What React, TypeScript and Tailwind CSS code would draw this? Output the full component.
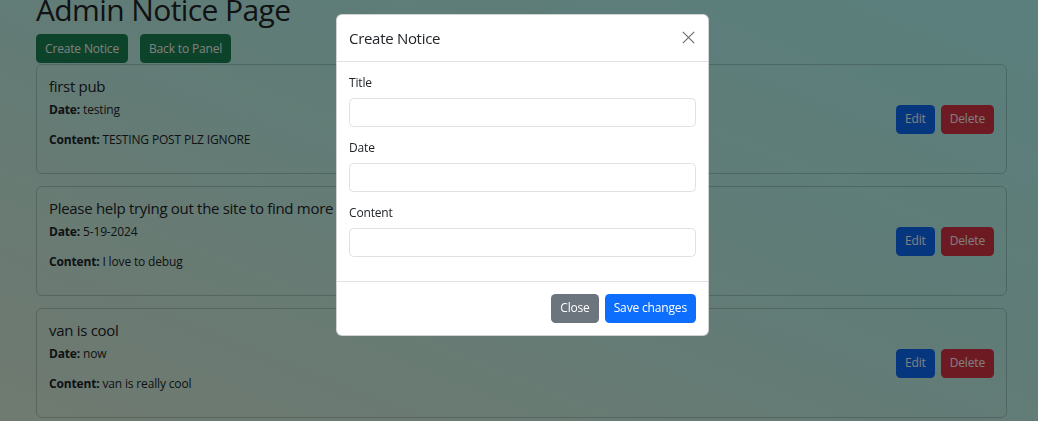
import React from "react";

interface Notice {
  title: string;
  date: string;
  content: string;
}

const NOTICES: Notice[] = [
  { title: "first pub", date: "testing", content: "TESTING POST PLZ IGNORE" },
  {
    title: "Please help trying out the site to find more",
    date: "5-19-2024",
    content: "I love to debug",
  },
  { title: "van is cool", date: "now", content: "van is really cool" },
];

// Segoe UI isn't around, Open Sans pulled in a little to match its widths
const FONT = "font-['Open_Sans','Noto_Sans',sans-serif] tracking-[-0.01em]";

function NoticeCard({ notice }: { notice: Notice }) {
  return (
    <div className="mb-[12px] flex items-center justify-between rounded-[6px] border border-black/[0.175] p-[12px]">
      <div>
        <h5 className="mb-[6px] text-[15px] leading-[1.2] font-normal tracking-[-0.02em]">{notice.title}</h5>
        <p className="mb-[12px] text-[12px] leading-[1.5]">
          <strong className="font-bold">Date:</strong> {notice.date}
        </p>
        <p className="mb-[12px] text-[12px] leading-[1.5]">
          <strong className="font-bold">Content:</strong> {notice.content}
        </p>
      </div>
      <div className="flex gap-[6px]">
        <button className="h-[29px] rounded-[4.5px] bg-[#0d6efd] px-[9px] text-[12px] text-white">Edit</button>
        <button className="h-[29px] rounded-[4.5px] bg-[#dc3545] px-[9px] text-[12px] text-white">Delete</button>
      </div>
    </div>
  );
}

function Field({ label }: { label: string }) {
  return (
    <div className="mb-[12px]">
      <label className="mb-[6px] block text-[12px] leading-[1.5] text-[#212529]">{label}</label>
      <input
        type="text"
        className="block h-[29px] w-full rounded-[4.5px] border border-[#dee2e6] bg-white px-[9px] text-[12px] outline-none"
      />
    </div>
  );
}

function CreateNoticeModal() {
  return (
    <div className="fixed left-[336px] top-[14px] w-[373px] rounded-[6px] border border-black/[0.175] bg-white text-[#212529]">
      {/* Header */}
      <div className="flex h-[46.5px] items-center justify-between border-b border-[#dee2e6] px-[12px]">
        <h5 className="text-[15px] leading-[1.5] font-normal tracking-[-0.02em]">Create Notice</h5>
        <button className="mr-[-1px] flex h-[18px] w-[18px] items-center justify-center text-[#707070]">
          <svg width="13" height="13" viewBox="0 0 16 16" fill="none" stroke="currentColor" strokeWidth="1.5">
            <path d="M1 1L15 15M15 1L1 15" />
          </svg>
        </button>
      </div>

      {/* Body */}
      <div className="p-[12px] pb-0">
        <Field label="Title" />
        <Field label="Date" />
        <Field label="Content" />
        <div className="h-[12px]" />
      </div>

      {/* Footer */}
      <div className="flex justify-end gap-[6px] border-t border-[#dee2e6] p-[12px]">
        <button className="h-[29px] rounded-[4.5px] bg-[#6c757d] px-[9px] text-[12px] text-white">Close</button>
        <button className="h-[29px] rounded-[4.5px] bg-[#0d6efd] px-[9px] text-[12px] text-white">Save changes</button>
      </div>
    </div>
  );
}

export default function App() {
  return (
    <div
      className={`relative h-[421px] overflow-hidden bg-[linear-gradient(to_bottom_left,#b4fffa,#c2f8ee_45%,#e0f4e0)] text-[#212529] ${FONT}`}
    >
      <div className="pl-[36px] pr-[31px]">
        <h1 className="mt-[-8px] mb-[6px] text-[30px] leading-[1.2] font-normal tracking-[-0.02em]">Admin Notice Page</h1>
        <div className="flex gap-[12px]">
          <button className="h-[29px] rounded-[4.5px] bg-[#198754] px-[9px] text-[12px] text-white">Create Notice</button>
          <button className="h-[29px] rounded-[4.5px] bg-[#198754] px-[9px] text-[12px] text-white">Back to Panel</button>
        </div>
        <div className="mt-[1px]">
          {NOTICES.map((n) => (
            <NoticeCard key={n.title} notice={n} />
          ))}
        </div>
      </div>

      {/* Backdrop */}
      <div className="fixed inset-0 bg-black/50" />

      <CreateNoticeModal />
    </div>
  );
}
